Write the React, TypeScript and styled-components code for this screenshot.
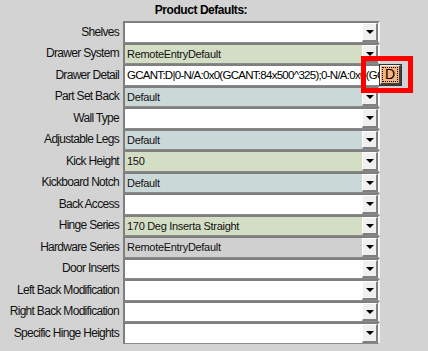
import React from 'react';
import styled, { createGlobalStyle } from 'styled-components';

const GlobalStyle = createGlobalStyle`
    html, body {
        margin: 0;
        padding: 0;
        background: #d3d3d3;
        font-family: "Liberation Sans", Arial, sans-serif;
        color: #111;
    }
`

const Page = styled.div`
    position: relative;
    width: 428px;
    height: 351px;
    overflow: hidden;
`

const Form = styled.div`
    width: 402px;
`

const Heading = styled.div<{ $gap?: number }>`
    height: 21px;
    margin-top: ${p => p.$gap || 0}px;
    line-height: 20px;
    text-align: center;
    font-weight: bold;
    font-size: 12px;
    letter-spacing: -0.45px;
    color: #000;
`

const Grid = styled.div`
    display: grid;
    grid-template-columns: 123px 257px 22px;
    grid-auto-rows: 21.5px;
`

const Label = styled.div`
    grid-column: 1;
    display: flex;
    align-items: center;
    justify-content: flex-end;
    padding-right: 4px;
    font-size: 12px;
    letter-spacing: -0.7px;
    white-space: nowrap;
`

const tones: Record<string, string> = {
    white: '#ffffff',
    green: '#d4dec5',
    blue: '#cbd8d8',
    gray: '#d0d0d0',
}

const SelectBox = styled.div<{ $tone: string }>`
    grid-column: 2;
    box-sizing: border-box;
    display: flex;
    align-items: stretch;
    background: ${p => tones[p.$tone]};
    border-top: 2px solid #7f7f7f;
    border-left: 2px solid #7f7f7f;
    border-bottom: 1px solid #8a8a8a;
    border-right: 2px solid #f6f6f6;
`

const SelectText = styled.div`
    flex: 1;
    display: flex;
    align-items: center;
    padding-left: 2px;
    font-size: 11px;
    letter-spacing: -0.3px;
    white-space: nowrap;
    overflow: hidden;
`

const ArrowButton = styled.div`
    width: 16px;
    box-sizing: border-box;
    background: #f0f0f0;
    border-top: 1px solid #ffffff;
    border-left: 1px solid #ffffff;
    border-right: 2px solid #808080;
    border-bottom: 2px solid #808080;
    display: flex;
    align-items: center;
    justify-content: center;
    padding-top: 1px;
`

const Arrow = styled.div`
    width: 0;
    height: 0;
    border-left: 4px solid transparent;
    border-right: 4px solid transparent;
    border-top: 4px solid #000;
`

const TextInput = styled.div`
    grid-column: 2;
    box-sizing: border-box;
    min-width: 0;
    background: #fff;
    border-top: 2px solid #7f7f7f;
    border-left: 2px solid #7f7f7f;
    border-bottom: 1px solid #8a8a8a;
    display: flex;
    align-items: center;
    padding-left: 2px;
    overflow: hidden;
`

const InputText = styled.span`
    font-size: 11.5px;
    letter-spacing: -0.72px;
    white-space: nowrap;
    color: #000;
`

const ButtonCell = styled.div`
    grid-column: 3;
    display: flex;
    align-items: center;
`

const DetailButton = styled.div`
    box-sizing: border-box;
    width: 21px;
    height: 20px;
    margin-top: 1px;
    background: #f9b27a;
    border-top: 1px solid #f4f4f4;
    border-left: 1px solid #f4f4f4;
    border-right: 2px solid #404040;
    border-bottom: 2px solid #404040;
    outline: 1px solid #333;
    display: flex;
    align-items: center;
    justify-content: center;
`

const FocusRing = styled.span`
    border: 1px dotted #000;
    font-size: 14px;
    line-height: 13px;
    padding: 0 2px;
    color: #000;
`

const Highlight = styled.div`
    position: absolute;
    left: 361px;
    top: 56px;
    width: 52px;
    height: 37px;
    box-sizing: border-box;
    border: 5px solid #ff0000;
    pointer-events: none;
`

type Row = {
    label: string,
    tone?: string,
    value?: string,
    input?: boolean,
}

const rows: Array<Row> = [
    { label: 'Shelves', tone: 'white' },
    { label: 'Drawer System', tone: 'green', value: 'RemoteEntryDefault' },
    { label: 'Drawer Detail', input: true, value: 'GCANT:D|0-N/A:0x0(GCANT:84x500^325);0-N/A:0x0(GC' },
    { label: 'Part Set Back', tone: 'blue', value: 'Default' },
    { label: 'Wall Type', tone: 'white' },
    { label: 'Adjustable Legs', tone: 'blue', value: 'Default' },
    { label: 'Kick Height', tone: 'green', value: '150' },
    { label: 'Kickboard Notch', tone: 'blue', value: 'Default' },
    { label: 'Back Access', tone: 'white' },
    { label: 'Hinge Series', tone: 'green', value: '170 Deg Inserta Straight' },
    { label: 'Hardware Series', tone: 'gray', value: 'RemoteEntryDefault' },
    { label: 'Door Inserts', tone: 'white' },
    { label: 'Left Back Modification', tone: 'white' },
    { label: 'Right Back Modification', tone: 'white' },
    { label: 'Specific Hinge Heights', tone: 'white' },
]

export default function App() {
    return (
        <>
            <GlobalStyle />
            <Page>
                <Form>
                    <Heading>Product Defaults:</Heading>
                    <Grid>
                        {rows.map(r => (
                            <React.Fragment key={r.label}>
                                <Label>{r.label}</Label>
                                {r.input ? (
                                    <>
                                        <TextInput><InputText>{r.value}</InputText></TextInput>
                                        <ButtonCell>
                                            <DetailButton><FocusRing>D</FocusRing></DetailButton>
                                        </ButtonCell>
                                    </>
                                ) : (
                                    <SelectBox $tone={r.tone || 'white'}>
                                        <SelectText>{r.value}</SelectText>
                                        <ArrowButton><Arrow /></ArrowButton>
                                    </SelectBox>
                                )}
                            </React.Fragment>
                        ))}
                    </Grid>
                    <Heading $gap={4}>Material Defaults:</Heading>
                </Form>
                <Highlight />
            </Page>
        </>
    )
}
